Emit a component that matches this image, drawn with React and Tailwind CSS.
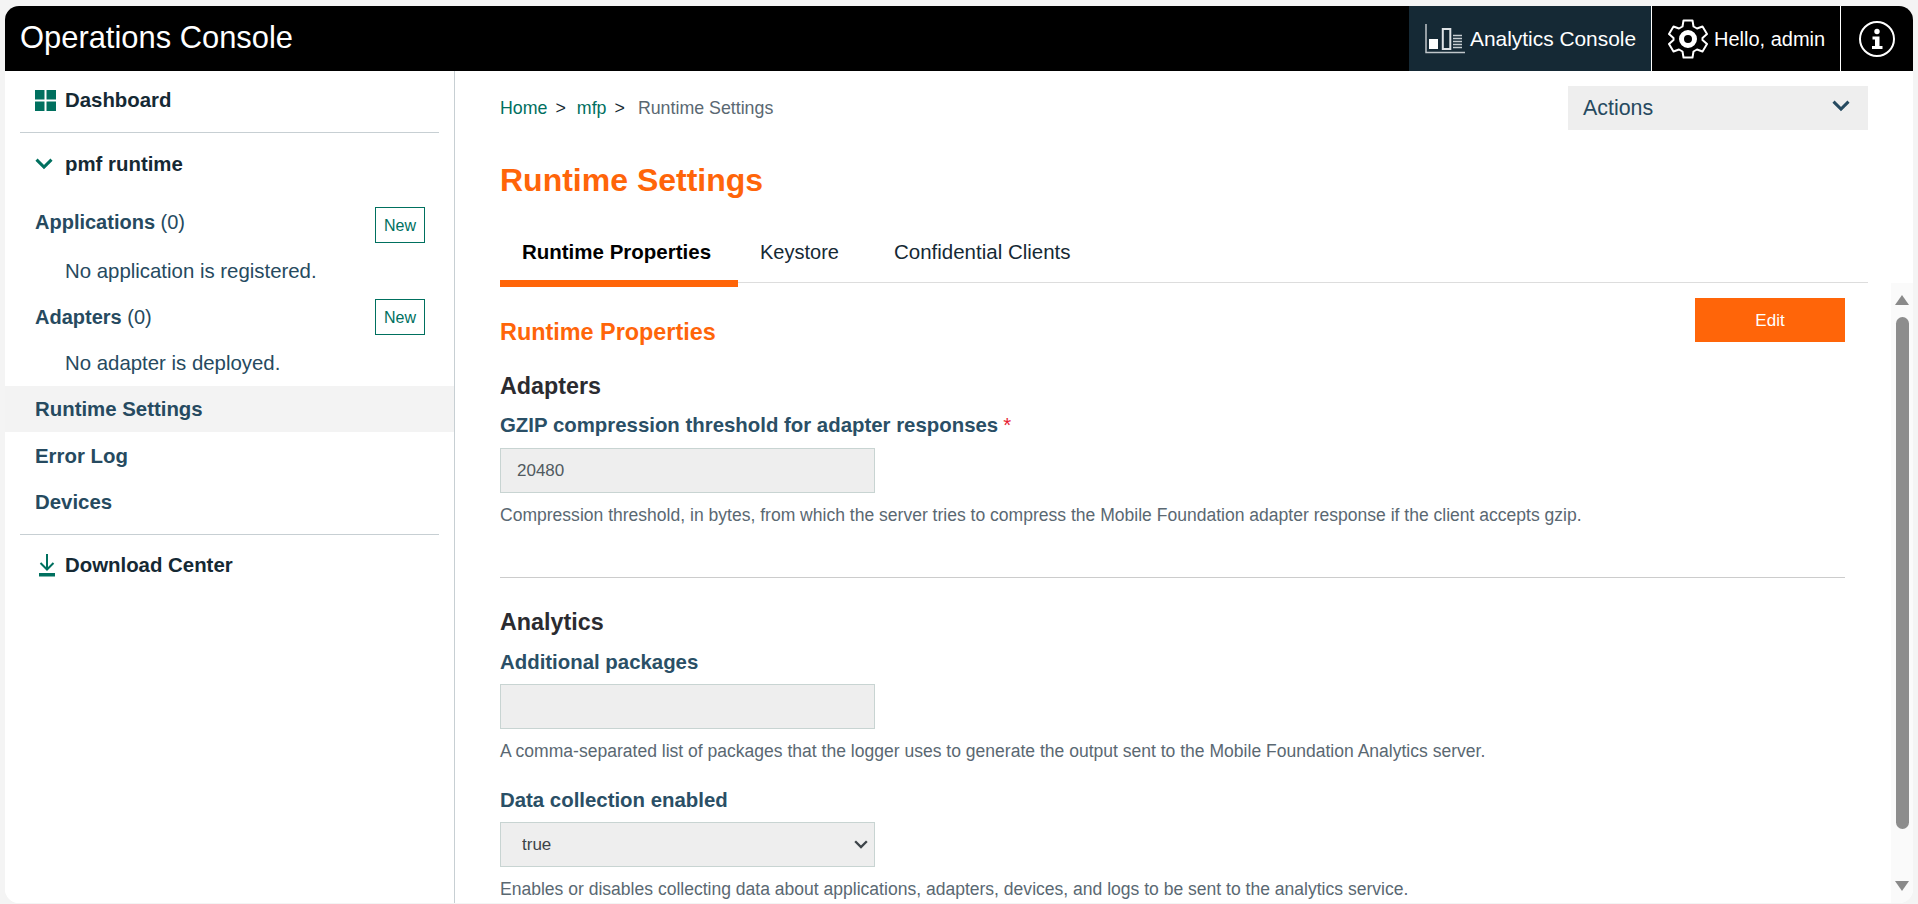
import React from "react";

const font = { fontFamily: '"Liberation Sans", Arial, sans-serif' };

const AnalyticsIcon = () => (
  <svg width="40" height="30" viewBox="0 0 40 30" className="shrink-0">
    <path d="M1 0V28.500H40" fill="none" stroke="#c0c6ca" strokeWidth="1.500" />
    <rect x="4" y="15" width="9" height="10" fill="#fff" />
    <rect x="17.800" y="5" width="7.500" height="20" fill="none" stroke="#dfe3e6" strokeWidth="2" />
    <path d="M28 11.500H37M28 14.500H37M28 17.500H37M28 20.500H37M28 23.500H37" stroke="#c7cdd1" strokeWidth="1.500" />
  </svg>
);

const GearIcon = () => (
  <svg width="40" height="40" viewBox="0 0 40 40" fill="none" className="shrink-0">
    <path
      d="M15.500 1.500H24.500L25.500 7.500L29 9.500L34.500 7.500L39 15L34.500 19V21L39 25L34.500 32.500L29 30.500L25.500 32.500L24.500 38.500H15.500L14.500 32.500L11 30.500L5.500 32.500L1 25L5.500 21V19L1 15L5.500 7.500L11 9.500L14.500 7.500Z"
      stroke="#fff"
      strokeWidth="2"
      strokeLinejoin="round"
    />
    <circle cx="20" cy="20" r="6.500" stroke="#fff" strokeWidth="5" />
  </svg>
);

const InfoIcon = () => (
  <svg width="36" height="36" viewBox="0 0 36 36" fill="none">
    <circle cx="18" cy="18" r="17" stroke="#fff" strokeWidth="2" />
    <circle cx="18" cy="10.500" r="2.700" fill="#fff" />
    <path d="M13.500 15.500H20.500V25H23.500V28H13V25H16V18.500H13.500Z" fill="#fff" />
  </svg>
);

const GridIcon = () => (
  <svg width="21" height="21" viewBox="0 0 21 21" className="shrink-0">
    <path d="M0 0H9.500V9.500H0ZM11.500 0H21V9.500H11.500ZM0 11.500H9.500V21H0ZM11.500 11.500H21V21H11.500Z" fill="#00705f" />
  </svg>
);

const ChevronIcon = ({ color, width = 18 }) => (
  <svg width={width} height={width * 0.62} viewBox="0 0 18 11" fill="none" className="shrink-0">
    <path d="M1.500 1.500L9 9L16.500 1.500" stroke={color} strokeWidth="3" />
  </svg>
);

const DownloadIcon = () => (
  <svg width="16" height="23" viewBox="0 0 16 23" fill="none" className="shrink-0">
    <path d="M8 0V15M1.500 9L8 15.500L14.500 9" stroke="#00705f" strokeWidth="2" />
    <rect x="0" y="19" width="16" height="3.500" fill="#00705f" />
  </svg>
);

const Tri = ({ down }) => (
  <svg width="14" height="10" viewBox="0 0 14 10" className="shrink-0">
    <path d={down ? "M0 0H14L7 10Z" : "M0 10H14L7 0Z"} fill="#8a8a8a" />
  </svg>
);

const NewButton = () => (
  <button className="flex h-[36px] w-[50px] items-center justify-center border border-[#00705f] pt-[1px] text-[16px] text-[#00705f]">
    New
  </button>
);

const SectionRow = ({ name, className, textClass }) => (
  <div className={`flex items-center justify-between pl-[30px] pr-[29px] ${className}`}>
    <span className={`text-[20px] text-[#264a60] ${textClass}`}>
      <span className="font-bold">{name}</span> (0)
    </span>
    <NewButton />
  </div>
);

const Sidebar = () => (
  <aside className="flex w-[450px] shrink-0 flex-col border-r border-[#c7cfd3] bg-white">
    <div className="flex h-[61px] items-center gap-[9px] pb-[3px] pl-[30px] text-[20.400px] font-bold text-[#152934]">
      <GridIcon />
      Dashboard
    </div>
    <div className="mx-[15px] h-[1px] bg-[#c7cfd3]" />
    <div className="flex h-[62px] items-center gap-[12px] pl-[30px] text-[20.400px] font-bold text-[#152934]">
      <ChevronIcon color="#00705f" />
      pmf runtime
    </div>
    <SectionRow name="Applications" className="mt-[12px]" textClass="mb-[6px]" />
    <div className="mt-[11px] flex h-[34px] items-center pl-[60px] text-[20.400px] text-[#264a60]">No application is registered.</div>
    <SectionRow name="Adapters" className="mt-[11px]" />
    <div className="mt-[11px] flex h-[34px] items-center pl-[60px] text-[20.400px] text-[#264a60]">No adapter is deployed.</div>
    <div className="mt-[6px] flex h-[46px] items-center bg-[#f3f3f3] pl-[30px] text-[20.400px] font-bold text-[#264a60]">Runtime Settings</div>
    <div className="mt-[1px] flex h-[46px] items-center pl-[30px] text-[20.400px] font-bold text-[#264a60]">Error Log</div>
    <div className="flex h-[46px] items-center pl-[30px] text-[20.400px] font-bold text-[#264a60]">Devices</div>
    <div className="mx-[15px] mt-[9px] h-[1px] bg-[#c7cfd3]" />
    <div className="flex h-[62px] items-center gap-[10px] pb-[2px] pl-[34px] text-[20.400px] font-bold text-[#152934]">
      <DownloadIcon />
      Download Center
    </div>
  </aside>
);

const Field = ({ label, required, help, gapClass = "mt-[9px]", children }) => (
  <div>
    <div className="flex h-[28px] items-center text-[20.400px] font-bold text-[#2a4f66]">
      {label}
      {required && <span className="ml-[5px] font-normal text-[#e71d32]">*</span>}
    </div>
    <div className={gapClass}>{children}</div>
    <p className="mt-[10px] flex h-[24px] items-center text-[17.550px] text-[#5a6872]">{help}</p>
  </div>
);

const inputClass = "block h-[45px] w-[375px] border border-[#c8d4d2] bg-[#eeeeee] px-[16px] pt-[1px] text-[17px] text-[#505a60]";

const App = () => (
  <div className="h-[904px] w-[1918px] overflow-hidden bg-[#f4f4f4] pb-[1px] pl-[5px] pr-[5px] pt-[6px]" style={font}>
    <div className="flex h-[897px] w-[1908px] flex-col overflow-hidden rounded-[14px] bg-white">
      <header className="flex h-[65px] shrink-0 items-center bg-black text-white">
        <div className="pl-[15px] text-[30.900px]">Operations Console</div>
        <div className="ml-auto flex h-full">
          <div className="flex w-[243px] items-center gap-[5px] border-r border-white bg-[#152935] pl-[16px] text-[20.900px]">
            <AnalyticsIcon />
            Analytics Console
          </div>
          <div className="flex w-[189px] items-center gap-[6px] border-r border-white pl-[16px] text-[20px]">
            <GearIcon />
            Hello, admin
          </div>
          <div className="flex w-[72px] items-center justify-center">
            <InfoIcon />
          </div>
        </div>
      </header>

      <div className="flex min-h-0 flex-1">
        <Sidebar />
        <main className="flex min-w-0 flex-1 flex-col">
          <div className="pl-[45px] pr-[45px]">
            <div className="mt-[15px] flex h-[44px] items-center justify-between">
              <nav className="flex items-center text-[17.800px]">
                <span className="text-[#00705f]">Home</span>
                <span className="ml-[8px] text-[#152934]">&gt;</span>
                <span className="ml-[11px] text-[#00705f]">mfp</span>
                <span className="ml-[8px] text-[#152934]">&gt;</span>
                <span className="ml-[13px] text-[#5a6872]">Runtime Settings</span>
              </nav>
              <div className="flex h-[44px] w-[300px] items-center justify-between bg-[#eeeeee] pl-[15px] pr-[18px] text-[21.400px] text-[#264a60]">
                Actions
                <span className="mb-[4px]">
                  <ChevronIcon color="#264a60" />
                </span>
              </div>
            </div>
            <h1 className="mt-[28px] flex h-[44px] items-center text-[32px] font-bold text-[#ff6509]">Runtime Settings</h1>
            <div className="mt-[26px] flex h-[55px] items-start border-b border-[#dddddd]">
              <div className="flex h-[59px] w-[238px] items-center justify-center border-b-[7px] border-[#ff6509] pb-[4px] pr-[5px] text-[20.500px] font-bold text-black">Runtime Properties</div>
              <div className="ml-[22px] flex h-[54px] items-center pb-[6px] text-[20px] text-[#152934]">Keystore</div>
              <div className="ml-[55px] flex h-[54px] items-center pb-[6px] text-[20.500px] text-[#152934]">Confidential Clients</div>
            </div>
          </div>

          <div className="flex min-h-0 flex-1">
            <div className="min-w-0 flex-1 overflow-hidden pl-[45px] pr-[46px]">
              <div className="flex items-start justify-between">
                <h2 className="mt-[35px] flex h-[30px] items-center text-[23.400px] font-bold text-[#ff6509]">Runtime Properties</h2>
                <button className="mt-[15px] h-[44px] w-[150px] bg-[#ff6509] pt-[1px] text-[17px] text-white">Edit</button>
              </div>
              <h3 className="mt-[21px] flex h-[34px] items-center text-[23.300px] font-bold text-[#2b2b30]">Adapters</h3>
              <div className="mt-[8px]">
                <Field label="GZIP compression threshold for adapter responses" required help="Compression threshold, in bytes, from which the server tries to compress the Mobile Foundation adapter response if the client accepts gzip.">
                  <input className={inputClass} value="20480" readOnly />
                </Field>
              </div>
              <div className="mt-[50px] h-[1px] bg-[#cccccc]" />
              <h3 className="mt-[27px] flex h-[34px] items-center text-[23.300px] font-bold text-[#2b2b30]">Analytics</h3>
              <div className="mt-[9px]">
                <Field label="Additional packages" gapClass="mt-[8px]" help="A comma-separated list of packages that the logger uses to generate the output sent to the Mobile Foundation Analytics server.">
                  <input className={inputClass} readOnly />
                </Field>
              </div>
              <div className="mt-[23px]">
                <Field label="Data collection enabled" gapClass="mt-[8px]" help="Enables or disables collecting data about applications, adapters, devices, and logs to be sent to the analytics service.">
                  <div className="relative w-[375px]">
                    <select className="block h-[45px] w-full appearance-none border border-[#c8d4d2] bg-[#eeeeee] pl-[21px] pt-[1px] text-[17px] text-[#3d4449]" defaultValue="true">
                      <option value="true">true</option>
                      <option value="false">false</option>
                    </select>
                    <span className="pointer-events-none absolute right-[7px] top-[18px]">
                      <ChevronIcon color="#3d4449" width={14} />
                    </span>
                  </div>
                </Field>
              </div>
            </div>
            <div className="flex w-[22px] shrink-0 flex-col items-center bg-[#fafafa] pb-[12px] pt-[12px]">
              <Tri />
              <div className="mt-[12px] h-[512px] w-[13px] rounded-full bg-[#8d8d8d]" />
              <div className="mt-auto">
                <Tri down />
              </div>
            </div>
          </div>
        </main>
      </div>
    </div>
  </div>
);

export default App;
